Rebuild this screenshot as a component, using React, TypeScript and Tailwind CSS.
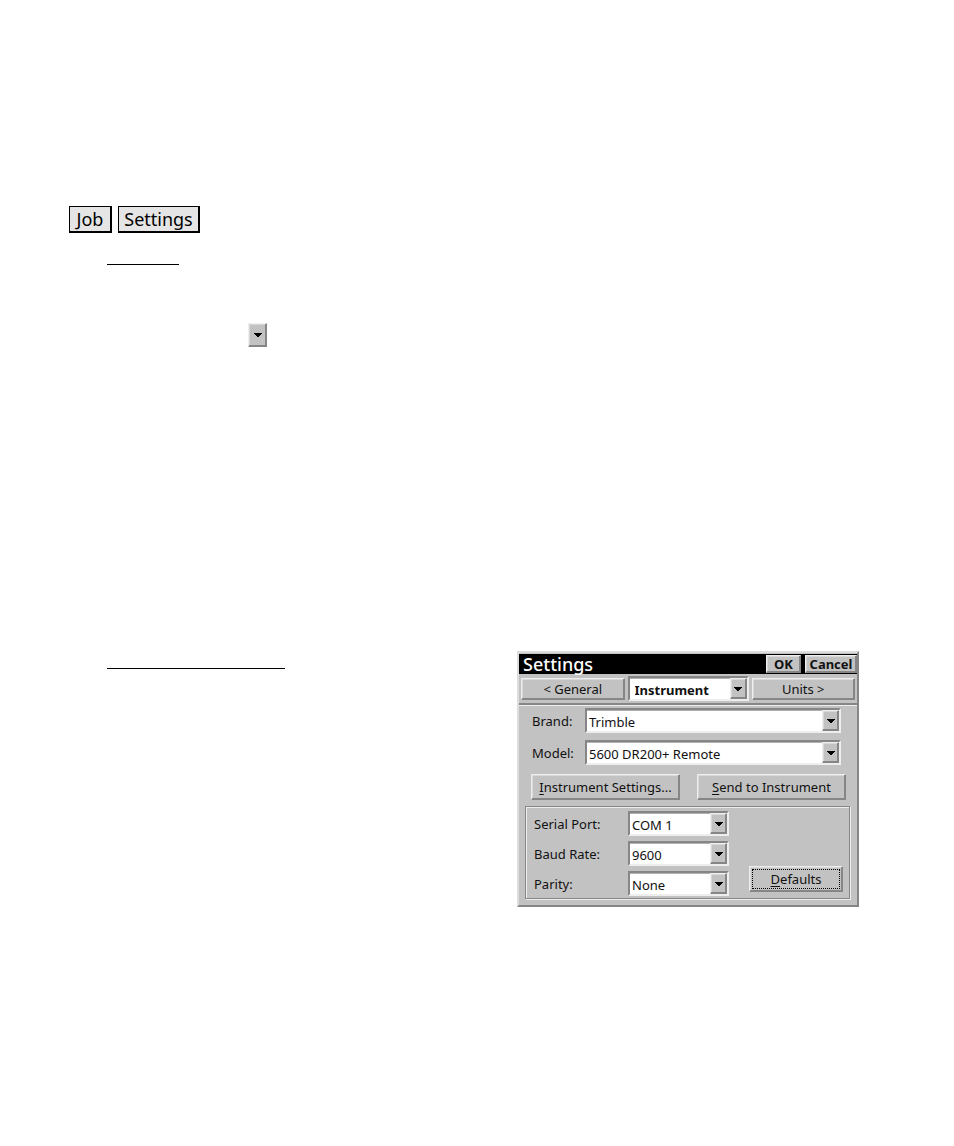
import React from 'react';
import clsx from 'clsx';

const raised = 'border border-t-[#eeeeee] border-l-[#eeeeee] border-b-[#868686] border-r-[#868686] bg-[#c2c2c2] shadow-[inset_-1px_-1px_0_#868686,inset_1px_1px_0_#d8d8d8]';
const sunken = 'border-2 border-t-[#868686] border-l-[#868686] border-b-[#eeeeee] border-r-[#eeeeee] bg-white';

const Arrow: React.FC = () => (
  <svg className="w-2 h-1" viewBox="0 0 8 4" fill="black" shapeRendering="crispEdges" aria-hidden="true">
    <path d="M0 0h8v1H7v1H6v1H5v1H3V3H2V2H1V1H0z" />
  </svg>
);

interface DropDownProps {
  id: string;
  options: string[];
  bold?: boolean;
  className?: string;
}

const DropDown: React.FC<DropDownProps> = ({ id, options, bold, className }) => (
  <div className={clsx('relative h-[25px]', sunken, className)}>
    <select
      id={id}
      aria-label={bold ? 'Page' : undefined}
      className={clsx(
        'block w-full h-full appearance-none bg-white pt-px pr-5 border-t border-[#b0b0b0] outline-none',
        bold ? 'pl-[5px] font-bold' : 'pl-[2px]'
      )}
    >
      {options.map((option) => (
        <option key={option}>{option}</option>
      ))}
    </select>
    <span
      className={clsx('absolute top-0 right-0 bottom-0 w-[17px] flex items-center justify-center pointer-events-none', raised)}
    >
      <Arrow />
    </span>
  </div>
);

interface PushButtonProps {
  children: React.ReactNode;
  className?: string;
}

const PushButton: React.FC<PushButtonProps> = ({ children, className }) => (
  <button type="button" className={clsx('flex items-center justify-center whitespace-nowrap', raised, className)}>
    {children}
  </button>
);

const DocButton: React.FC<PushButtonProps> = ({ children, className }) => (
  <button
    type="button"
    className={clsx(
      'h-[27px] flex items-center justify-center border border-r-2 border-b-2 border-black bg-[#e5e5e5] text-lg leading-6',
      className
    )}
  >
    {children}
  </button>
);

const ports = [
  { id: 'port', label: 'Serial Port:', options: ['COM 1', 'COM 2'] },
  { id: 'baud', label: 'Baud Rate:', options: ['9600', '19200'] },
  { id: 'parity', label: 'Parity:', options: ['None', 'Even', 'Odd'] },
];

const SettingsDialog: React.FC = () => (
  <section
    aria-label="Settings"
    className="w-[342px] shrink-0 border-2 border-t-[#dddddd] border-l-[#dddddd] border-b-[#868686] border-r-[#868686] bg-[#c2c2c2] pb-[6px] text-[13px] leading-4 text-[#111111]"
  >
    <header className="mt-px flex h-5 items-center bg-black">
      <h1 className="flex-1 pl-1 text-lg leading-5 font-medium text-white">Settings</h1>
      <PushButton className="h-[18px] w-[35px] font-bold">OK</PushButton>
      <PushButton className="ml-1 h-[18px] w-[52px] font-bold">Cancel</PushButton>
    </header>

    <nav className="flex h-[31px] items-center gap-[3px] border-b-2 border-[#868686] px-[2px]">
      <PushButton className="h-[22px] flex-1">&lt; General</PushButton>
      <DropDown id="page" options={['Instrument', 'General', 'Units']} bold className="w-[121px]" />
      <PushButton className="h-[22px] flex-1">Units &gt;</PushButton>
    </nav>

    <div className="border-t border-[#eeeeee] pt-[2px]">
      <div className="flex flex-col gap-[7px] pl-[13px] pr-4">
        <div className="flex items-center">
          <label htmlFor="brand" className="w-[53px]">Brand:</label>
          <DropDown id="brand" options={['Trimble']} className="flex-1" />
        </div>
        <div className="flex items-center">
          <label htmlFor="model" className="w-[53px]">Model:</label>
          <DropDown id="model" options={['5600 DR200+ Remote']} className="flex-1" />
        </div>
      </div>

      <div className="mt-[9px] flex justify-between pl-3 pr-[11px]">
        <PushButton className="h-[26px] w-[149px]">
          <span className="underline underline-offset-2">I</span>nstrument Settings...
        </PushButton>
        <PushButton className="h-[26px] w-[149px]">
          <span className="underline underline-offset-2">S</span>end to Instrument
        </PushButton>
      </div>

      <div className="mt-[6px] ml-[6px] mr-[7px] border border-[#868686] shadow-[1px_1px_0_#eeeeee,inset_1px_1px_0_#eeeeee] flex items-end justify-between pt-1 pb-[2px] pl-2 pr-[6px]">
        <div className="flex flex-col gap-[5px]">
          {ports.map((port) => (
            <div key={port.id} className="flex items-center">
              <label htmlFor={port.id} className="w-[94px]">{port.label}</label>
              <DropDown id={port.id} options={port.options} className="w-[101px]" />
            </div>
          ))}
        </div>
        <PushButton className="mb-1 h-[26px] w-[94px] p-[2px]">
          <span className="flex h-full w-full items-center justify-center border border-dotted border-black">
            <span className="underline underline-offset-2">D</span>efaults
          </span>
        </PushButton>
      </div>
    </div>
  </section>
);

const App: React.FC = () => (
  <main className="bg-white pt-[206px] pb-[239px] pl-[69px] pr-[95px] text-black font-['Noto_Sans','Open_Sans',sans-serif]">
    <nav className="flex gap-[6px]">
      <DocButton className="w-[43px]">Job</DocButton>
      <DocButton className="w-[82px]">Settings</DocButton>
    </nav>

    <div className="pl-[38px]">
      <hr className="mt-[31px] w-[72px] border-black" />
      <button
        type="button"
        aria-label="Open list"
        className={clsx('mt-[58px] ml-[141px] flex h-6 w-[19px] items-center justify-center', raised)}
      >
        <Arrow />
      </button>

      <div className="mt-[304px] flex items-start justify-between">
        <hr className="mt-[17px] w-[178px] border-black" />
        <SettingsDialog />
      </div>
    </div>
  </main>
);

export default App;
